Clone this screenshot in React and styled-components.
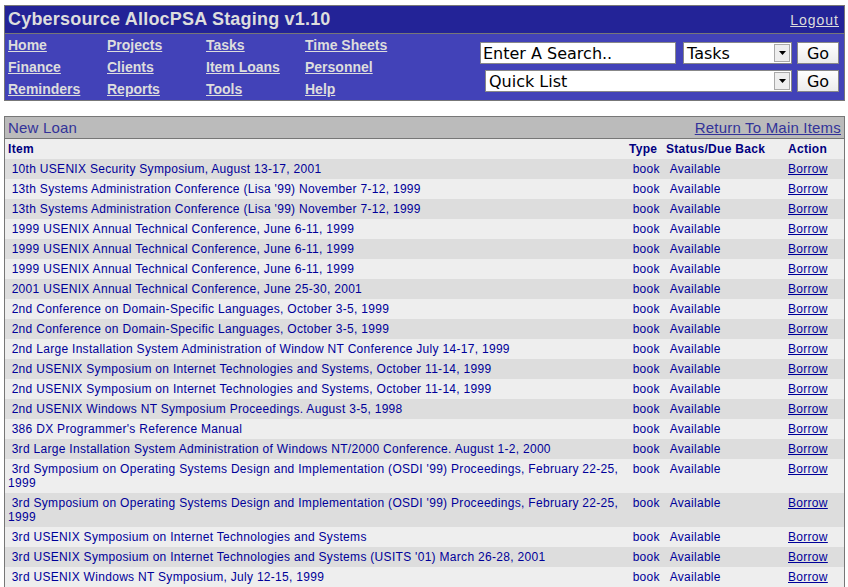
import React from 'react'
import styled, { createGlobalStyle } from 'styled-components'

const GlobalStyle = createGlobalStyle`
  body {
    margin: 0;
    background: #ffffff;
    font-family: "Liberation Sans", Arial, sans-serif;
  }
`

const Page = styled.div`
  padding: 5px 3px 0 4px;
`

const HeaderBox = styled.div`
  border: 1px solid #777777;
`

const TitleBar = styled.div`
  display: flex;
  justify-content: space-between;
  align-items: center;
  height: 27px;
  padding: 0 5px 0 3px;
  background: #232397;
  border-bottom: 1px solid #777777;
`

const Title = styled.h1`
  margin: 0;
  font-size: 18px;
  letter-spacing: 0.2px;
  font-weight: bold;
  color: #dddddd;
`

const Logout = styled.a`
  font-size: 14px;
  letter-spacing: 1px;
  color: #dddddd;
  text-decoration: underline;
`

const NavBar = styled.div`
  display: flex;
  justify-content: space-between;
  background: #4242b8;
  padding: 0 5px 0 3px;
  height: 66px;
`

const NavGrid = styled.div`
  display: grid;
  grid-template-columns: repeat(4, 99px);
  grid-auto-rows: 22px;
  align-items: center;
`

const NavLink = styled.a`
  font-size: 14px;
  font-weight: bold;
  color: #dddddd;
  text-decoration: underline;
  justify-self: start;
`

const SearchArea = styled.div`
  display: flex;
  flex-direction: column;
  align-items: flex-end;
  gap: 6px;
  padding-top: 8px;
`

const SearchRow = styled.div`
  display: flex;
  gap: 5px;
`

const TextInput = styled.input`
  box-sizing: border-box;
  width: 196px;
  height: 22px;
  margin: 0 2px 0 0;
  padding: 0 2px;
  border: 1px solid #888888;
  background: #ffffff;
  font-family: "DejaVu Sans", sans-serif;
  font-size: 16px;
  color: #000000;
  outline: none;
`

const Select = styled.div`
  box-sizing: border-box;
  display: flex;
  align-items: center;
  width: ${p => p.$width}px;
  height: 22px;
  border: 1px solid #888888;
  background: #ffffff;
  font-family: "DejaVu Sans", sans-serif;
  font-size: 16px;
  color: #000000;
`

const SelectText = styled.span`
  flex: 1;
  padding-left: 3px;
`

const Arrow = styled.span`
  box-sizing: border-box;
  display: flex;
  align-items: center;
  justify-content: center;
  width: 16px;
  height: 18px;
  margin-right: 1px;
  border: 1px solid #aaaaaa;
  background: #eeeeee;
`

const GoButton = styled.button`
  box-sizing: border-box;
  width: 42px;
  height: 22px;
  padding: 0;
  border: 1px solid #888888;
  background: linear-gradient(#ffffff, #ececec);
  font-family: "DejaVu Sans", sans-serif;
  font-size: 16px;
  color: #000000;
`

const ListBox = styled.div`
  margin-top: 15px;
  border: 1px solid #777777;
`

const ListHeader = styled.div`
  display: flex;
  justify-content: space-between;
  align-items: center;
  height: 21px;
  padding: 0 3px;
  background: #bbbbbb;
  border-bottom: 1px solid #777777;
  font-size: 15px;
  letter-spacing: 0.2px;
  color: #333399;
`

const HeaderLink = styled.a`
  color: #333399;
  text-decoration: underline;
`

const Table = styled.table`
  width: 100%;
  table-layout: fixed;
  border-collapse: collapse;
  font-size: 12px;
  letter-spacing: 0.3px;
  line-height: 14px;
`

const Th = styled.th`
  padding: 3px;
  text-align: left;
  font-weight: bold;
  color: #000080;
  background: #eeeeee;
  white-space: nowrap;
`

const Row = styled.tr`
  background: ${p => (p.$odd ? '#dddddd' : '#eeeeee')};
`

const Td = styled.td`
  padding: 3px;
  vertical-align: top;
  color: #000099;
`

const BorrowLink = styled.a`
  color: #000099;
  text-decoration: underline;
`

const navLinks = [
  'Home', 'Projects', 'Tasks', 'Time Sheets',
  'Finance', 'Clients', 'Item Loans', 'Personnel',
  'Reminders', 'Reports', 'Tools', 'Help',
]

const items = [
  '10th USENIX Security Symposium, August 13-17, 2001',
  "13th Systems Administration Conference (Lisa '99) November 7-12, 1999",
  "13th Systems Administration Conference (Lisa '99) November 7-12, 1999",
  '1999 USENIX Annual Technical Conference, June 6-11, 1999',
  '1999 USENIX Annual Technical Conference, June 6-11, 1999',
  '1999 USENIX Annual Technical Conference, June 6-11, 1999',
  '2001 USENIX Annual Technical Conference, June 25-30, 2001',
  '2nd Conference on Domain-Specific Languages, October 3-5, 1999',
  '2nd Conference on Domain-Specific Languages, October 3-5, 1999',
  '2nd Large Installation System Administration of Window NT Conference July 14-17, 1999',
  '2nd USENIX Symposium on Internet Technologies and Systems, October 11-14, 1999',
  '2nd USENIX Symposium on Internet Technologies and Systems, October 11-14, 1999',
  '2nd USENIX Windows NT Symposium Proceedings. August 3-5, 1998',
  "386 DX Programmer's Reference Manual",
  '3rd Large Installation System Administration of Windows NT/2000 Conference. August 1-2, 2000',
  "3rd Symposium on Operating Systems Design and Implementation (OSDI '99) Proceedings, February 22-25, 1999",
  "3rd Symposium on Operating Systems Design and Implementation (OSDI '99) Proceedings, February 22-25, 1999",
  '3rd USENIX Symposium on Internet Technologies and Systems',
  "3rd USENIX Symposium on Internet Technologies and Systems (USITS '01) March 26-28, 2001",
  '3rd USENIX Windows NT Symposium, July 12-15, 1999',
]

const DropArrow = () => (
  <Arrow>
    <svg width="7" height="4" viewBox="0 0 7 4">
      <path d="M0 0h7L3.5 4z" fill="#000" />
    </svg>
  </Arrow>
)

const App = () => (
  <Page>
    <GlobalStyle />
    <HeaderBox>
      <TitleBar>
        <Title>Cybersource AllocPSA Staging v1.10</Title>
        <Logout href="#">Logout</Logout>
      </TitleBar>
      <NavBar>
        <NavGrid>
          {navLinks.map(l => (
            <NavLink key={l} href="#">{l}</NavLink>
          ))}
        </NavGrid>
        <SearchArea>
          <SearchRow>
            <TextInput defaultValue="Enter A Search.." />
            <Select $width={109}>
              <SelectText>Tasks</SelectText>
              <DropArrow />
            </Select>
            <GoButton>Go</GoButton>
          </SearchRow>
          <SearchRow>
            <Select $width={307}>
              <SelectText>Quick List</SelectText>
              <DropArrow />
            </Select>
            <GoButton>Go</GoButton>
          </SearchRow>
        </SearchArea>
      </NavBar>
    </HeaderBox>

    <ListBox>
      <ListHeader>
        <span>New Loan</span>
        <HeaderLink href="#">Return To Main Items</HeaderLink>
      </ListHeader>
      <Table>
        <colgroup>
          <col />
          <col style={{ width: 37 }} />
          <col style={{ width: 122 }} />
          <col style={{ width: 59 }} />
        </colgroup>
        <thead>
          <tr>
            <Th>Item</Th>
            <Th>Type</Th>
            <Th>Status/Due Back</Th>
            <Th>Action</Th>
          </tr>
        </thead>
        <tbody>
          {items.map((name, i) => (
            <Row key={i} $odd={i % 2 === 0}>
              <Td>{'\u00a0' + name}</Td>
              <Td>{'\u00a0book'}</Td>
              <Td>{'\u00a0Available'}</Td>
              <Td>
                <BorrowLink href="#">Borrow</BorrowLink>
              </Td>
            </Row>
          ))}
        </tbody>
      </Table>
    </ListBox>
  </Page>
)

export default App
